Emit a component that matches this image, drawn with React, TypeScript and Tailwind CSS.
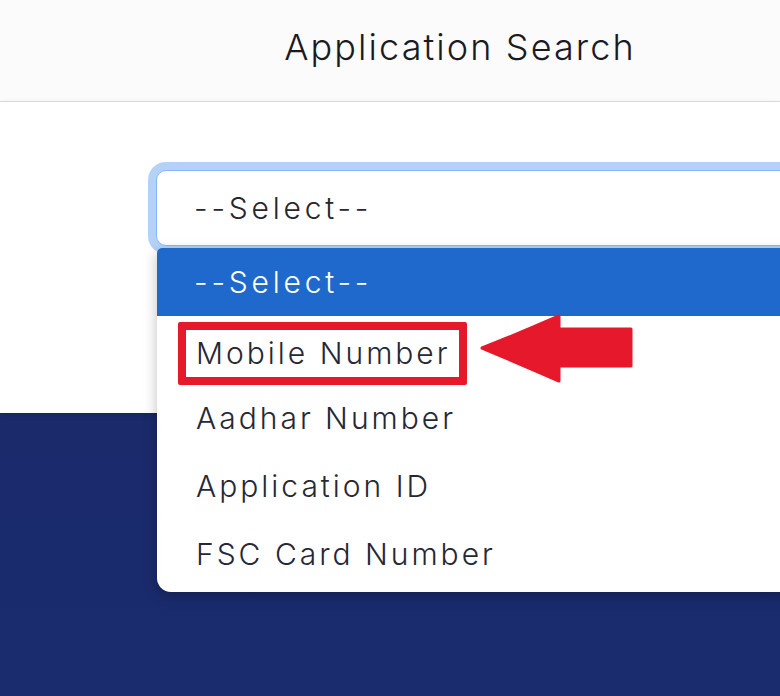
import React from 'react';

const options = ['Aadhar Number', 'Application ID', 'FSC Card Number'];

function Arrow() {
  // red pointer aimed at the highlighted option
  return (
    <svg className="shrink-0 -mt-[13px] ml-[8px]" width="164" height="78" viewBox="0 0 164 78">
      <path
        d="M7 39 Q45 24 84 7 L84 20 L156 20 L156 57 L84 57 L84 72 Q45 55 7 39 Z"
        fill="#e5192b"
        stroke="#e5192b"
        strokeWidth="3"
        strokeLinejoin="round"
      />
    </svg>
  );
}

export default function App() {
  return (
    <div
      className="relative w-[780px] h-[696px] overflow-hidden bg-gradient-to-b from-[#1a2a68] to-[#1a2b6e] text-[#212529]"
      style={{ fontFamily: 'Inter, "Noto Sans", sans-serif' }}
    >
      <header className="h-[102px] bg-[#fbfbfb] border-b border-[#dedede] flex items-center justify-center pl-[140px]">
        <h1 className="text-[36px] font-light tracking-[2.1px] text-[#1b1b1f] -mt-[8px]">Application Search</h1>
      </header>

      <section className="h-[311px] bg-white shadow-[0_2px_6px_rgba(0,0,0,0.12)] pt-[68px] pl-[156px]">
        <div className="w-[700px] h-[76px] rounded-[10px] border border-[#86b7fe] shadow-[0_0_0_8px_#b4d2f8] bg-white flex items-center pl-[37px]">
          <span className="text-[30px] font-light tracking-[3.8px] text-[#26262c]">--Select--</span>
        </div>
      </section>

      <ul className="absolute left-[157px] top-[248px] w-[700px] bg-white rounded-t-[5px] rounded-b-[14px] pb-[4px] shadow-[0_4px_14px_rgba(0,0,0,0.25)] text-[30px] font-light text-[#262833]">
        <li className="h-[68px] bg-[#1f69cc] text-white flex items-center pl-[37px] tracking-[3.8px] rounded-t-[5px]">--Select--</li>
        <li className="h-[68px] flex items-start pt-[6px] pl-[21px]">
          <span className="h-[63px] flex items-center border-[8px] border-[#e5192b] rounded-[2px] pl-[10px] pr-[8px] tracking-[3px]">
            Mobile Number
          </span>
          <Arrow />
        </li>
        {options.map(o => (
          <li key={o} className="h-[68px] flex items-center pl-[39px] tracking-[3px]">
            {o}
          </li>
        ))}
      </ul>
    </div>
  );
}
